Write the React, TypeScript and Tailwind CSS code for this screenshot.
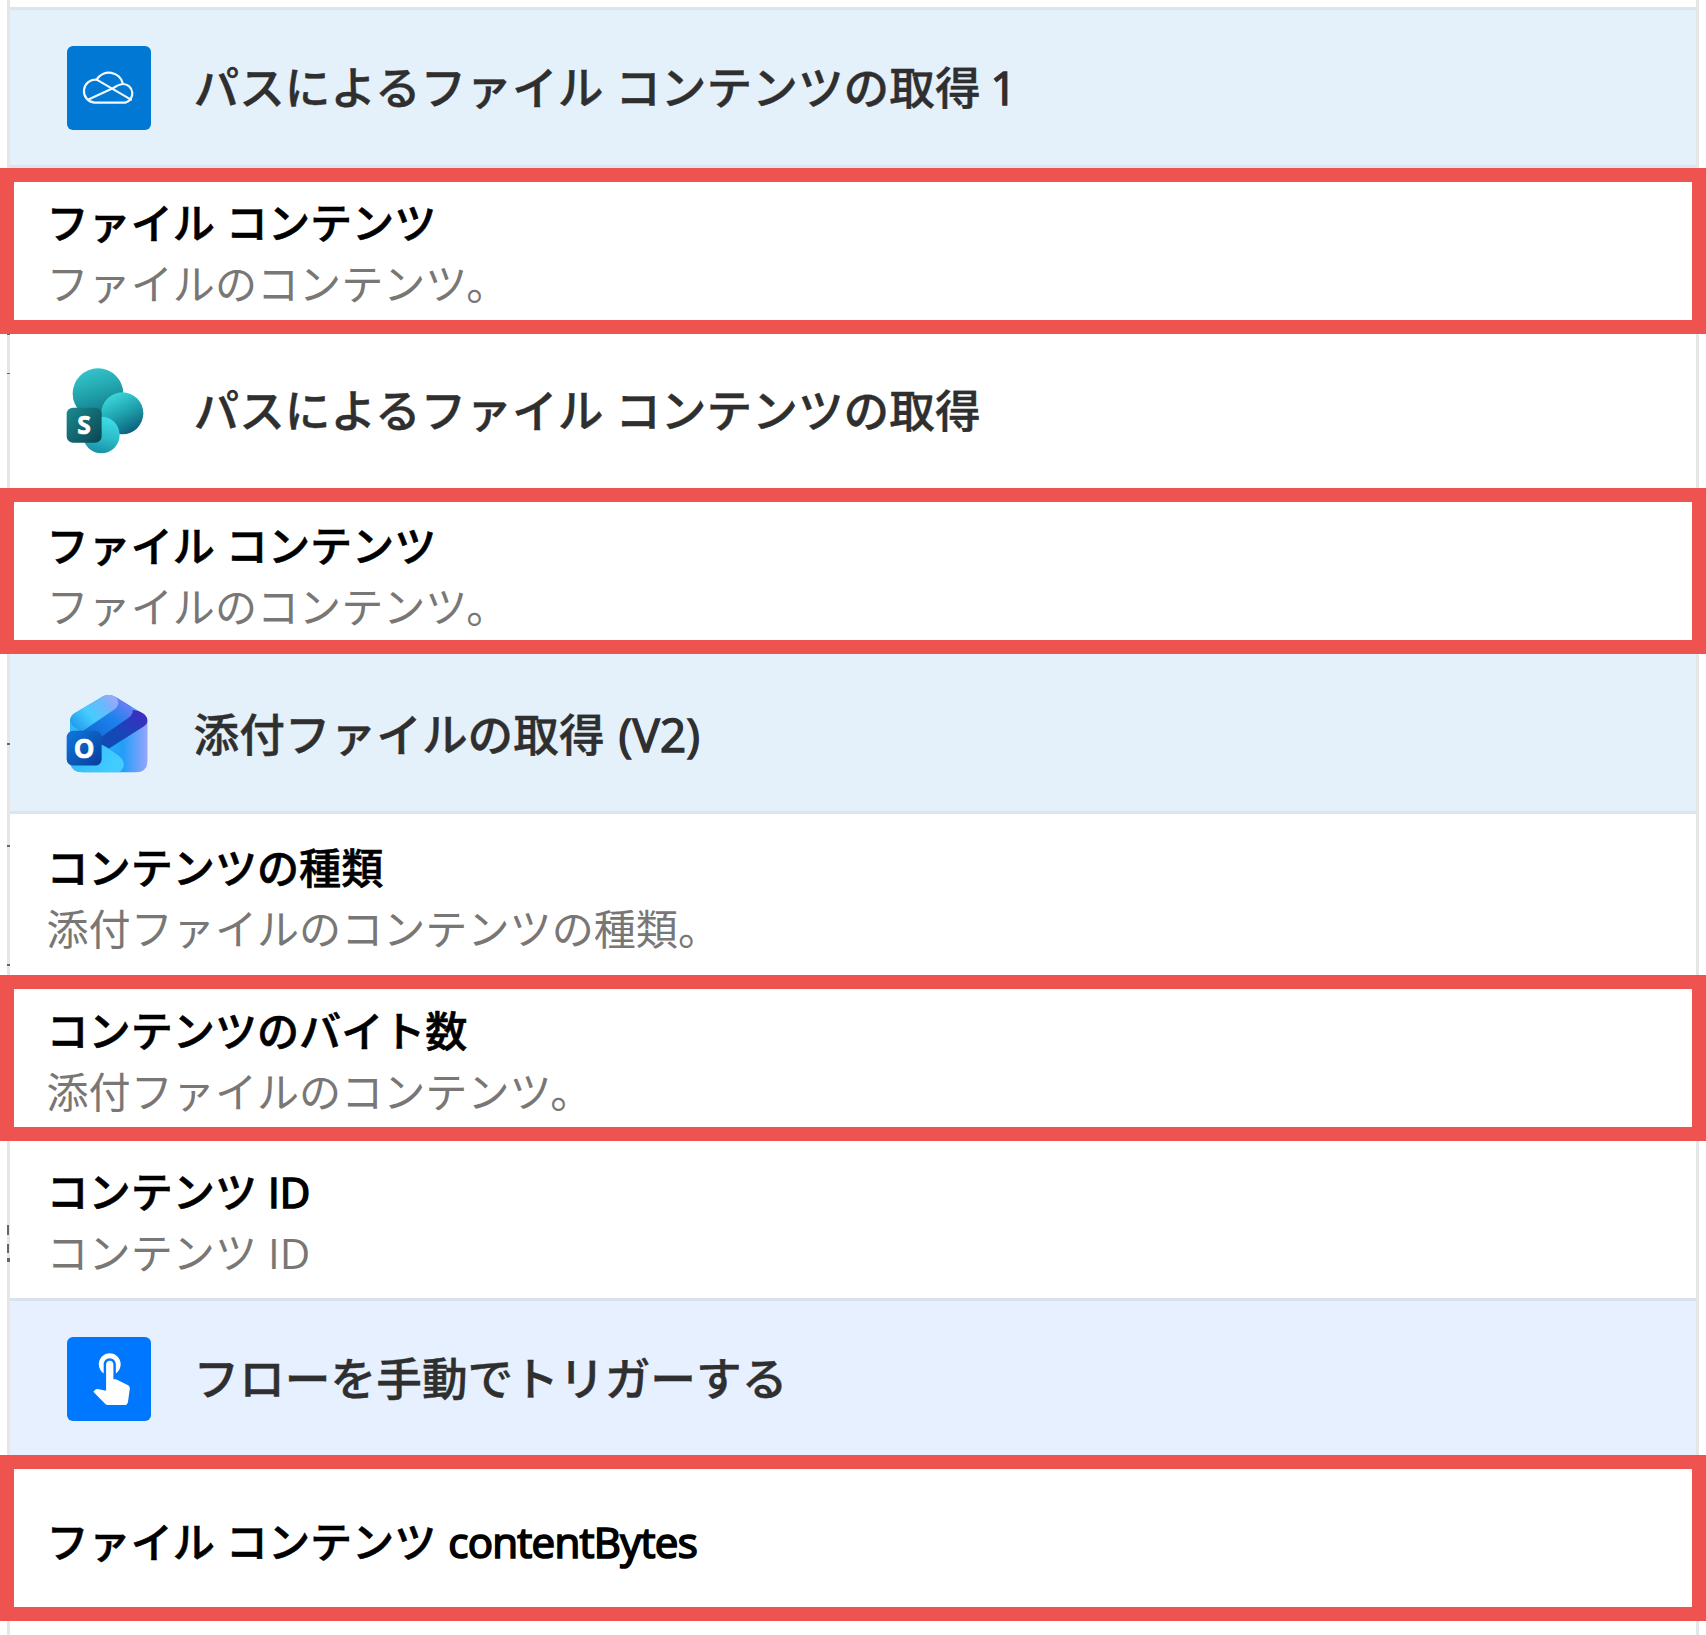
import type { ReactNode } from "react";

function OneDriveIcon() {
  return (
    <svg viewBox="51 46 252 252" className="size-full rounded-[6px] bg-[#0078d4]">
      <g fill="none" stroke="#f1f8fe" strokeWidth="6.5" strokeLinecap="round" strokeLinejoin="round">
        <path d="M133 216 A34.5 34.5 0 1 1 140 147 A43 43 0 0 1 219 160 A28.500 28.500 0 0 1 226 216 Z" />
        <path d="M140 147 L243 207" />
        <path d="M117 206 L190 172 Q206 161 219 160" />
      </g>
    </svg>
  );
}

function SharePointIcon() {
  return (
    <svg viewBox="81 55 252 252" className="size-full overflow-visible">
      <defs>
        <linearGradient id="spA" x1="0.3" y1="0" x2="0.6" y2="1">
          <stop offset="0" stopColor="#35c5cc" />
          <stop offset="0.45" stopColor="#22a5ad" />
          <stop offset="1" stopColor="#0d6f80" />
        </linearGradient>
        <linearGradient id="spB" x1="0.2" y1="0.1" x2="0.65" y2="1">
          <stop offset="0" stopColor="#3ad6d8" />
          <stop offset="0.5" stopColor="#1fa0ac" />
          <stop offset="1" stopColor="#0c5f7c" />
        </linearGradient>
        <linearGradient id="spC" x1="0.8" y1="0.1" x2="0.6" y2="1">
          <stop offset="0" stopColor="#3cdbe3" />
          <stop offset="0.55" stopColor="#2bbbc8" />
          <stop offset="1" stopColor="#1b93a8" />
        </linearGradient>
        <linearGradient id="spD" x1="0" y1="0" x2="1" y2="1">
          <stop offset="0" stopColor="#1b8b90" />
          <stop offset="1" stopColor="#0a4450" />
        </linearGradient>
      </defs>
      <circle cx="174" cy="129" r="76" fill="url(#spA)" />
      <circle cx="247" cy="188" r="63" fill="url(#spB)" />
      <circle cx="184" cy="253" r="55" fill="url(#spC)" />
      <rect x="80" y="171" width="105" height="105" rx="19" fill="url(#spD)" />
      <text x="132" y="250" textAnchor="middle" fill="#fff" stroke="#fff" strokeWidth="2" fontSize="74" fontWeight="700" fontFamily="'Open Sans', sans-serif">S</text>
    </svg>
  );
}

function OutlookIcon() {
  return (
    <svg viewBox="81 37.500 252 252" className="size-full overflow-visible">
      <defs>
        <linearGradient id="olBody" x1="0.2" y1="0" x2="1" y2="0">
          <stop offset="0" stopColor="#2fb9fa" />
          <stop offset="0.6" stopColor="#229ef8" />
          <stop offset="1" stopColor="#98a5fb" />
        </linearGradient>
        <linearGradient id="olLow" x1="0" y1="0" x2="1" y2="0.4">
          <stop offset="0" stopColor="#31b7f8" />
          <stop offset="1" stopColor="#42ccff" />
        </linearGradient>
        <linearGradient id="olTop" x1="0" y1="0.8" x2="1" y2="0.1">
          <stop offset="0" stopColor="#1f98ec" />
          <stop offset="0.4" stopColor="#46cdfd" />
          <stop offset="0.7" stopColor="#6bb7fb" />
          <stop offset="1" stopColor="#a9a4fb" />
        </linearGradient>
        <linearGradient id="olMid" x1="0" y1="1" x2="1" y2="0">
          <stop offset="0.1" stopColor="#1268d4" />
          <stop offset="0.55" stopColor="#1c82ec" />
          <stop offset="1" stopColor="#8d7cf8" />
        </linearGradient>
        <linearGradient id="olDark" x1="0" y1="1" x2="1" y2="0">
          <stop offset="0.1" stopColor="#0d4cb4" />
          <stop offset="0.5" stopColor="#1846b8" />
          <stop offset="1" stopColor="#4527c4" />
        </linearGradient>
        <linearGradient id="olTile" x1="0" y1="0" x2="1" y2="1">
          <stop offset="0" stopColor="#0f79dc" />
          <stop offset="1" stopColor="#073d9c" />
        </linearGradient>
        <clipPath id="olClip">
          <path d="M90 120 Q91 106 103 98 L188 48 Q206 38 224 48 L308 98 Q322 107 323 121 L323 240 Q322 276 287 276 L128 276 Q92 276 90 240 Z" />
        </clipPath>
      </defs>
      <g clipPath="url(#olClip)">
        <rect x="88" y="40" width="236" height="238" fill="url(#olBody)" />
        <path d="M90 150 L184 190 L236 226 Q256 242 250 260 Q246 272 232 277 L90 277 Z" fill="url(#olLow)" />
        <path d="M150 180 L278 88 L323 98 L323 122 Q321 131 312 137 L207 204 L180 190 Z" fill="url(#olDark)" />
        <path d="M116 152 L232 66 L226 46 L262 70 Q282 84 278 96 Q276 103 268 110 L182 170 L160 176 Z" fill="url(#olMid)" />
        <path d="M86 110 L206 36 L222 46 Q238 58 234 72 Q232 80 224 86 L127 152 Q92 142 86 110 Z" fill="url(#olTop)" />
      </g>
      <rect x="80" y="151" width="105" height="104" rx="19" fill="url(#olTile)" />
      <text x="132" y="231" textAnchor="middle" fill="#fff" stroke="#fff" strokeWidth="2" fontSize="78" fontWeight="700" fontFamily="'Open Sans', sans-serif">O</text>
    </svg>
  );
}

function TouchIcon() {
  return (
    <svg viewBox="81 49.500 252 252" className="size-full rounded-[6px] bg-[#0077ff]">
      <path
        transform="translate(125.300 76) scale(7.300 7.400)"
        fill="#fff"
        d="M9 11.240V7.500C9 6.120 10.120 5 11.500 5S14 6.120 14 7.500v3.740c1.210-.81 2-2.180 2-3.740C16 5.010 13.990 3 11.500 3S7 5.010 7 7.500c0 1.560.79 2.930 2 3.740zm9.840 4.630l-4.540-2.260c-.17-.07-.35-.11-.54-.11H13v-6c0-.83-.67-1.500-1.500-1.500S10 6.670 10 7.500v10.740l-3.430-.72c-.08-.01-.15-.03-.24-.03-.31 0-.59.13-.79.33l-.79.8 4.940 4.940c.27.27.65.44 1.060.44h6.790c.75 0 1.330-.55 1.440-1.280l.75-5.270c.01-.07.02-.14.02-.2 0-.62-.38-1.160-.91-1.380z"
      />
    </svg>
  );
}

function Header({ icon, className, children }: { icon: ReactNode; className: string; children: ReactNode }) {
  return (
    <div className={`mr-[10px] ml-[10px] flex shrink-0 items-center gap-[42.500px] pl-[57px] ${className}`}>
      <div className="size-[84px] shrink-0">{icon}</div>
      <h2 className="pb-[2px] text-[45.700px] leading-[62px] font-medium whitespace-pre text-[#2f2f2f] [-webkit-text-stroke:0.4px_#2f2f2f]">
        {children}
      </h2>
    </div>
  );
}

function Item({ title, desc, className }: { title: ReactNode; desc?: ReactNode; className: string }) {
  return (
    <div className={`shrink-0 ${className}`}>
      <div className="text-[42.100px] leading-[62px] font-medium whitespace-pre text-black [-webkit-text-stroke:0.6px_#000]">
        {title}
      </div>
      {desc && (
        <div className="-mt-px text-[42.100px] leading-[62px] font-normal whitespace-pre text-[#797775]">{desc}</div>
      )}
    </div>
  );
}

const BOX = "h-[166px] border-[14px] border-[#ef5350] bg-white pl-[32.500px]";

const MARKS = [
  "top-[334px] h-[1px] w-[3px]",
  "top-[373px] h-[1px] w-[3px]",
  "top-[743px] h-[2px] w-[3px]",
  "top-[845px] h-[2px] w-[3px]",
  "top-[964px] h-[2px] w-[3px]",
  "top-[1225px] h-[10px] w-[2px]",
  "top-[1244px] h-[9px] w-[2px]",
  "top-[1258px] h-[4px] w-[3px]",
];

export default function App() {
  return (
    <div className="relative h-[1635px] w-[1706px] overflow-hidden bg-white font-['Open_Sans','Noto_Sans_CJK_JP',sans-serif]">
      <div className="absolute inset-y-0 right-[7px] left-[7px] border-x-[3px] border-[#e6e6e6]" />
      {MARKS.map((m) => (
        <div key={m} className={`absolute left-[7px] bg-[#666] ${m}`} />
      ))}
      <div className="relative flex flex-col pt-[7px]">
        <Header icon={<OneDriveIcon />} className="h-[161px] border-y-[3px] border-[#dae6ed] bg-[#e5f1fa]">
          パスによるファイル コンテンツの取得 <span className="-ml-[2px] [-webkit-text-stroke:1.500px_#2f2f2f]">1</span>
        </Header>
        <Item className={`${BOX} pt-[10px]`} title="ファイル コンテンツ" desc="ファイルのコンテンツ。" />
        <Header icon={<SharePointIcon />} className="h-[154px]">
          パスによるファイル コンテンツの取得
        </Header>
        <Item className={`${BOX} pt-[13px]`} title="ファイル コンテンツ" desc="ファイルのコンテンツ。" />
        <Header icon={<OutlookIcon />} className="h-[160px] border-b-[3px] border-[#dae6ed] bg-[#e5f1fa] pt-[4px]">
          添付ファイルの取得{" "}
          <span className="ml-[2px] tracking-[0.400px] [-webkit-text-stroke:1.500px_#2f2f2f]">(V2)</span>
        </Header>
        <Item className="h-[161px] pt-[23px] pl-[46.500px]" title="コンテンツの種類" desc="添付ファイルのコンテンツの種類。" />
        <Item className={`${BOX} pt-[11px]`} title="コンテンツのバイト数" desc="添付ファイルのコンテンツ。" />
        <Item
          className="h-[157px] pt-[20px] pl-[46.500px]"
          title={
            <>
              コンテンツ <span className="[-webkit-text-stroke:1.700px_#000]">ID</span>
            </>
          }
          desc="コンテンツ ID"
        />
        <Header icon={<TouchIcon />} className="h-[157px] border-t-[3px] border-[#d8e2ef] bg-[#e6f0fe] pt-[2px]">
          フローを手動でトリガーする
        </Header>
        <Item
          className={`${BOX} pt-[42px]`}
          title={
            <>
              ファイル コンテンツ{" "}
              <span className="ml-[1px] tracking-[-0.750px] [-webkit-text-stroke:1.700px_#000]">contentBytes</span>
            </>
          }
        />
      </div>
    </div>
  );
}
